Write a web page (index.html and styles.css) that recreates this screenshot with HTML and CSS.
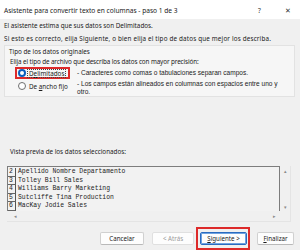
FILE: index.html
```html
<!DOCTYPE html>
<html lang="es">

<head>
    <meta charset="utf-8">
    <title>Asistente para convertir texto en columnas</title>
    <link rel="stylesheet" href="styles.css">
</head>

<body>
    <div class="window">
        <header class="titlebar">
            <span class="title">Asistente para convertir texto en columnas - paso 1 de 3</span>
            <span class="help">?</span>
            <span class="close">✕</span>
        </header>

        <main class="dialog">
            <p class="line">El asistente estima que sus datos son Delimitados.</p>
            <p class="line wide">Si esto es correcto, elija Siguiente, o bien elija el tipo de datos que mejor los describa.</p>

            <section class="group">
                <div class="group-title">Tipo de los datos originales</div>
                <p class="hint">Elija el tipo de archivo que describa los datos con mayor precisión:</p>
                <div class="option">
                    <label class="choice marked"><span class="radio on"></span><span class="focus">D<u>e</u>limitados</span></label>
                    <span class="desc">- Caracteres como comas o tabulaciones separan campos.</span>
                </div>
                <div class="option">
                    <label class="choice"><span class="radio"></span><span class="plain">De <u>a</u>ncho fijo</span></label>
                    <span class="desc">- Los campos están alineados en columnas con espacios entre uno y<br>otro.</span>
                </div>
            </section>

            <p class="preview-label">Vista previa de los datos seleccionados:</p>

            <div class="preview">
                <div class="pane">
                    <div class="row"><span class="num">2</span>Apellido Nombre Departamento</div>
                    <div class="row"><span class="num">3</span>Tolley Bill Sales</div>
                    <div class="row"><span class="num">4</span>Williams Barry Marketing</div>
                    <div class="row"><span class="num">5</span>Sutcliffe Tina Production</div>
                    <div class="row"><span class="num">6</span>MacKay Jodie Sales</div>
                </div>
                <div class="vscroll"><span>▴</span><span>▾</span></div>
                <div class="hscroll"><span>◂</span><span>▸</span></div>
                <div class="corner"></div>
            </div>

            <footer class="buttons">
                <button class="btn cancel">Cancelar</button>
                <button class="btn disabled">&lt; Atrás</button>
                <span class="marked-btn"><button class="btn primary"><u>S</u>iguiente &gt;</button></span>
                <button class="btn finish"><u>F</u>inalizar</button>
            </footer>
        </main>
    </div>
</body>

</html>
```

FILE: styles.css
```css
/**** GENERAL ****/

body {
    margin: 0;
    background-color: #f0f0f0;
    font-family: 'Noto Sans', 'Open Sans', sans-serif;
    color: #1b1b1b;
}

p {
    margin: 0;
}

u {
    text-decoration-thickness: 0.5px;
    text-underline-offset: 1px;
}

.window {
    width: 300px;
    height: 250px;
    display: flex;
    flex-direction: column;
    overflow: hidden;
}

/**** TITLE BAR ****/

.titlebar {
    height: 20px;
    background-color: #ffffff;
    display: flex;
    align-items: center;
    padding: 1px 0 0 4px;
    box-sizing: border-box;
    font-size: 6.6px;
}

.title {
    flex: 1;
}

.help {
    width: 27px;
    font-size: 6.5px;
    color: #333;
}

.close {
    width: 15px;
    font-size: 7px;
    color: #333;
}

/**** DIALOG ****/

.dialog {
    flex: 1;
    display: flex;
    flex-direction: column;
    padding: 0 4px;
    font-size: 6.3px;
}

.line {
    line-height: 13px;
}

.line.wide {
    letter-spacing: 0.17px;
}

.group {
    margin-right: 1px;
    background-color: #f6f6f6;
    border: 1px solid #e2e2e2;
    padding: 1px 0 1px 5px;
}

.group-title {
    line-height: 10px;
    margin-left: -1px;
}

.hint {
    line-height: 10px;
    letter-spacing: -0.1px;
}

.option {
    display: flex;
    align-items: flex-start;
}

.choice {
    width: 62px;
    height: 12px;
    margin-left: 5px;
    display: flex;
    align-items: center;
    box-sizing: border-box;
    padding-left: 3px;
    flex-shrink: 0;
}

.choice.marked {
    width: 55px;
    border: 2px solid #dd2a2a;
    padding-left: 1px;
    margin-right: 7px;
}

.radio {
    width: 8px;
    height: 8px;
    border-radius: 50%;
    box-sizing: border-box;
    border: 1px solid #6f6f6f;
    background-color: #fff;
    margin-right: 3px;
}

.radio.on {
    border: 2.5px solid #0a5fc0;
}

.focus {
    outline: 1px dotted #444;
    line-height: 7px;
    padding: 0 1px;
    margin-left: -1px;
}

.desc {
    font-family: 'Liberation Sans', Arial, sans-serif;
    font-size: 6.55px;
    line-height: 7.4px;
    padding-top: 2px;
}

.option:last-child .choice {
    margin-top: 1px;
}

.option:last-child .desc {
    padding-top: 1px;
}

/**** PREVIEW ****/

.preview-label {
    margin-top: 50px;
    line-height: 10px;
    padding-left: 6px;
}

.preview {
    margin-top: 9px;
    margin-left: 3px;
    margin-right: 5px;
    height: 55px;
    display: grid;
    grid-template-columns: 1fr 10px;
    grid-template-rows: 1fr 10px;
    border: 1px solid #e4e4e4;
    border-left: none;
    border-top: none;
}

.pane {
    border: 1px solid #7d7d7d;
    border-bottom: none;
    background-color: #f2f2f2;
    padding-top: 1px;
    font-family: 'Liberation Mono', 'Courier New', monospace;
    font-size: 6.4px;
    color: #222;
    overflow: hidden;
}

.row {
    height: 8.6px;
    line-height: 8.6px;
    white-space: nowrap;
    display: flex;
}

.num {
    width: 8px;
    box-sizing: border-box;
    border-right: 1px solid #555;
    border-bottom: 1px solid #666;
    padding-left: 1px;
    margin-right: 2px;
}

.vscroll,
.hscroll {
    display: flex;
    justify-content: space-between;
    color: #8a8a8a;
    font-size: 5px;
}

.vscroll {
    flex-direction: column;
    align-items: center;
    padding: 2px 0 1px 1px;
}

.hscroll {
    align-items: center;
    padding: 0 4px 0 7px;
}

/**** BUTTONS ****/

.buttons {
    margin-top: 5px;
    display: flex;
    justify-content: flex-end;
    align-items: center;
    padding-right: 2px;
}

.btn {
    width: 42px;
    height: 13px;
    padding: 0;
    font-family: 'Noto Sans', 'Open Sans', sans-serif;
    font-size: 6.2px;
    color: #1b1b1b;
    background-color: #fdfdfd;
    border: 1px solid #d0d0d0;
    border-bottom-color: #b9b9b9;
    border-radius: 2px;
}

.btn.cancel {
    width: 44px;
    margin-right: 8px;
}

.btn.disabled {
    color: #9a9a9a;
    border-color: #e0e0e0;
    margin-right: 2px;
}

.btn.primary {
    width: 47px;
    border: 1px solid #2a6bc0;
    box-shadow: inset 0 0 0 1px #6fa3e0;
}

.btn.finish {
    width: 37px;
}

.marked-btn {
    border: 2px solid #dd2a2a;
    padding: 3px 1px 3px 2px;
    margin-right: 7px;
    display: flex;
}
```
